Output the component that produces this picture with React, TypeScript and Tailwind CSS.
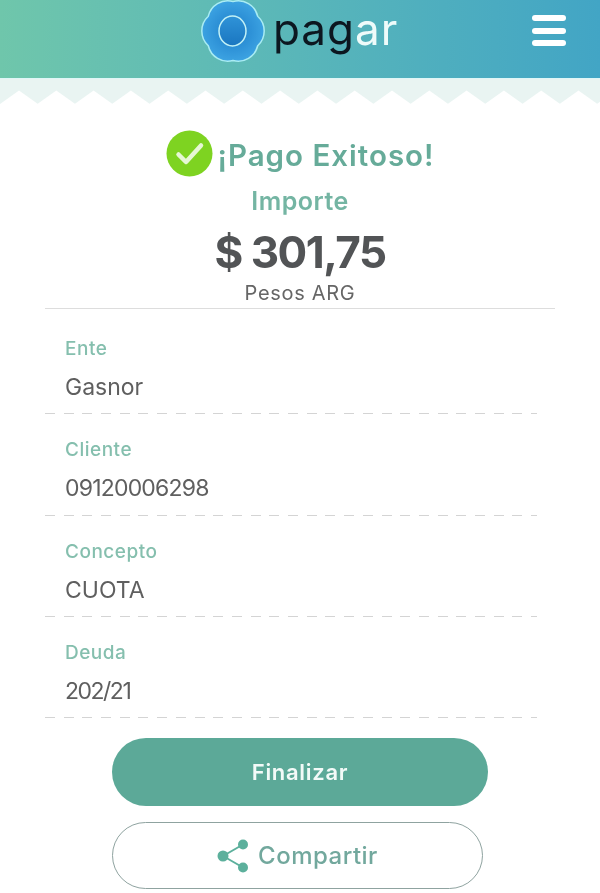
const font = { fontFamily: '"Inter", "Liberation Sans", sans-serif' };

function Flower() {
  return (
    <svg width="66" height="66" viewBox="0 0 66 66" className="shrink-0">
      <defs>
        <radialGradient id="fl" cx="50%" cy="50%" r="55%">
          <stop offset="0%" stopColor="#1f7fc8" />
          <stop offset="55%" stopColor="#2f93d8" />
          <stop offset="100%" stopColor="#3fa6e4" />
        </radialGradient>
        <linearGradient id="core" x1="0" y1="0" x2="0" y2="1">
          <stop offset="0%" stopColor="#2f93d8" />
          <stop offset="100%" stopColor="#1a76c0" />
        </linearGradient>
      </defs>
      <path
        d="M33 3.5A20 20 0 0 1 57.7 18.25A20 20 0 0 1 57.7 47.75A20 20 0 0 1 33 62.5A20 20 0 0 1 8.3 47.75A20 20 0 0 1 8.3 18.25A20 20 0 0 1 33 3.5Z"
        fill="url(#fl)"
        stroke="#a9ecf3"
        strokeWidth="1.5"
      />
      <ellipse cx="32.5" cy="33" rx="13.5" ry="15" fill="url(#core)" stroke="#c2f1f6" strokeWidth="1.5" />
    </svg>
  );
}

function Zigzag() {
  const teeth = Array.from({ length: 17 }, (_, i) => i);
  return (
    <svg width="600" height="26" viewBox="0 0 600 26" className="block">
      <rect width="600" height="26" fill="#e9f4f2" />
      <rect width="600" height="1" fill="#dff6f7" />
      {teeth.map((i) => {
        const c = 19 + i * 37.3;
        return <polygon key={i} points={`${c - 19},26 ${c},12.5 ${c + 19},26`} fill="#ffffff" />;
      })}
    </svg>
  );
}

function Row({ label, value, className, valueClass }: { label: string; value: string; className: string; valueClass: string }) {
  return (
    <div className={`flex w-[492px] flex-col ${className}`}>
      <div className="pl-5 text-[19px] leading-[24px] font-medium tracking-[0.5px] text-[#85bfae]">{label}</div>
      <div className={`mt-[13px] pl-5 text-[23px] leading-[26px] text-[#5f5f5f] ${valueClass}`}>{value}</div>
      <div className="mt-auto h-px bg-[repeating-linear-gradient(to_right,#d4d4d4_0,#d4d4d4_10px,transparent_10px,transparent_18.7px)]" />
    </div>
  );
}

export default function App() {
  return (
    <div className="h-[893px] w-[600px] overflow-hidden bg-white blur-[0.5px]" style={font}>
      <header className="relative flex h-[78px] items-start bg-gradient-to-r from-[#6fc6ab] to-[#42a5c5] pl-[200px]">
        <div className="-mt-[2px]">
          <Flower />
        </div>
        <div className="ml-[7px] mt-[5px] text-[44px] leading-[48px] font-normal tracking-[1px] text-[#0c1720]">
          pag<span className="text-[#eefbfa]">ar</span>
        </div>
        <div className="absolute right-[34px] top-[15px] flex w-[34px] flex-col gap-[6.5px]">
          <span className="h-[6px] rounded-[3px] bg-white" />
          <span className="h-[6px] rounded-[3px] bg-white" />
          <span className="h-[6px] rounded-[3px] bg-white" />
        </div>
      </header>
      <Zigzag />
      <section className="flex flex-col items-center">
        <div className="mt-[26px] flex h-[46px] items-center pl-[1px]">
          <svg width="47" height="47" viewBox="0 0 47 47" className="shrink-0">
            <circle cx="23.5" cy="23.5" r="23" fill="#7ed321" />
            <path d="M12.5 24.5L20 32L35 15.5" fill="none" stroke="#e6f7d4" strokeWidth="4.5" strokeLinecap="round" strokeLinejoin="round" />
          </svg>
          <span className="ml-[4px] mt-[4px] text-[29.5px] leading-[36px] font-semibold tracking-[1px] text-[#66ab99]">¡Pago Exitoso!</span>
        </div>
        <div className="mt-[10px] text-[25px] leading-[30px] font-semibold tracking-[0.5px] text-[#74b5a3]">Importe</div>
        <div className="mt-[11px] text-[44px] leading-[50px] font-bold tracking-[-1.5px] text-[#525456]">$ 301,75</div>
        <div className="mt-[4px] text-[20px] leading-[24px] tracking-[0.7px] text-[#666666]">Pesos ARG</div>
      </section>
      <div className="mx-[45px] mt-[3px] border-t border-[#dddddd]" />
      <div className="ml-[45px] mt-[28px] flex flex-col">
        <Row label="Ente" value="Gasnor" className="h-[77px]" valueClass="" />
        <Row label="Cliente" value="09120006298" className="h-[102px] pt-[24px]" valueClass="tracking-[-0.8px]" />
        <Row label="Concepto" value="CUOTA" className="h-[101px] pt-[24px]" valueClass="" />
        <Row label="Deuda" value="202/21" className="h-[101px] pt-[24px]" valueClass="tracking-[-1.5px]" />
      </div>
      <div className="ml-[112px] mt-[20px] flex h-[68px] w-[376px] items-center justify-center rounded-full bg-[#5ca998] text-[22px] font-semibold tracking-[0.7px] text-[#f2faf8]">
        Finalizar
      </div>
      <div className="ml-[112px] mt-[16px] flex h-[67px] w-[371px] items-center justify-center gap-[9px] rounded-full border border-[#8fa3a0] text-[24px] font-medium tracking-[0.5px] text-[#72a89d]">
        <svg width="32" height="34" viewBox="0 0 32 34" className="shrink-0">
          <path d="M6 17L26 5.5M6 17L26 28.5" stroke="#5cb09c" strokeWidth="2" fill="none" />
          <circle cx="6" cy="17" r="5.5" fill="#5cb09c" />
          <circle cx="26" cy="5.5" r="5" fill="#5cb09c" />
          <circle cx="26" cy="28.5" r="5" fill="#5cb09c" />
        </svg>
        Compartir
      </div>
    </div>
  );
}
